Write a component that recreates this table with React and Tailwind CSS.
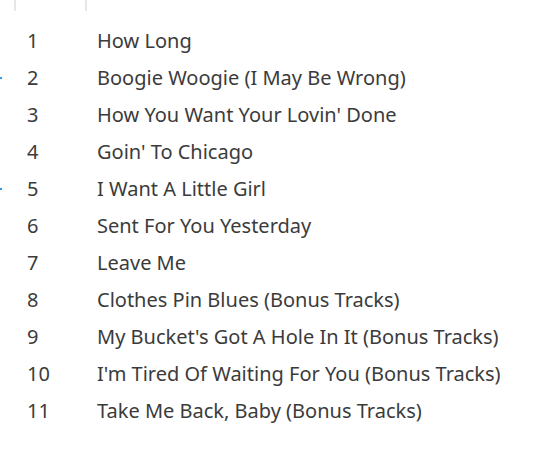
import React from 'react';

const tracks = [
  'How Long',
  'Boogie Woogie (I May Be Wrong)',
  "How You Want Your Lovin' Done",
  "Goin' To Chicago",
  'I Want A Little Girl',
  'Sent For You Yesterday',
  'Leave Me',
  'Clothes Pin Blues (Bonus Tracks)',
  "My Bucket's Got A Hole In It (Bonus Tracks)",
  "I'm Tired Of Waiting For You (Bonus Tracks)",
  'Take Me Back, Baby (Bonus Tracks)',
];

// rows with the little blue marker on the left edge
const marked = [2, 5];

export default function App() {
  return (
    <div className="w-[543px] h-[454px] bg-white overflow-hidden text-[#3b3b3b] font-['Noto_Sans',sans-serif]">
      {/* column header separators */}
      <div className="flex h-[11px]">
        <div className="ml-[14px] w-[2px] bg-[#e6e6e6]" />
        <div className="ml-[69px] w-[2px] bg-[#e6e6e6]" />
      </div>

      <div className="pt-[11px] flex flex-col">
        {tracks.map((title, i) => (
          <div key={i} className="relative flex items-center h-[37px] text-[20px]">
            {marked.includes(i + 1) && (
              <span className="absolute left-0 top-[18px] w-[2px] h-[2px] bg-[#2b9cf2]" />
            )}
            <span className="w-[97px] pl-[27px]">{i + 1}</span>
            <span>{title}</span>
          </div>
        ))}
      </div>
    </div>
  );
}
